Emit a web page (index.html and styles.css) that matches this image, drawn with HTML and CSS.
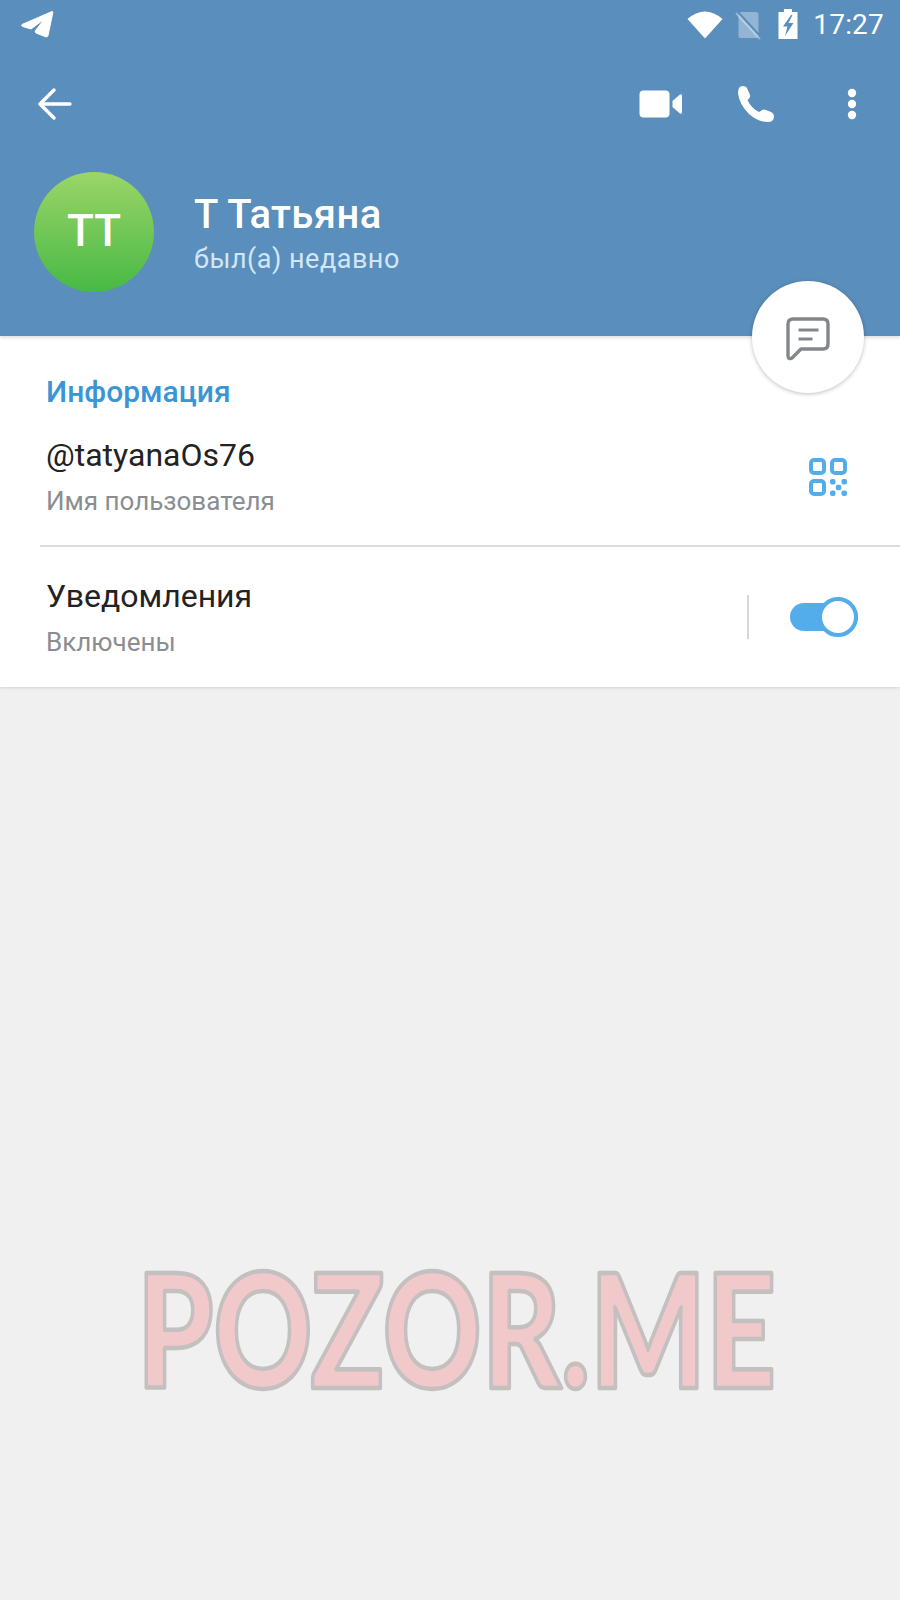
FILE: index.html
```html
<!DOCTYPE html>
<html lang="ru">
<head>
<meta charset="UTF-8">
<meta name="viewport" content="width=device-width, initial-scale=1.0">
<title>Т Татьяна</title>
<link rel="stylesheet" href="styles.css">
</head>
<body>
<div class="screen">
    <header class="header">
        <div class="status-bar">
            <svg class="icon-plane" width="34" height="28" viewBox="0 0 34 28">
                <path d="M32 1.500 L2 14.500 Q0.500 15.500 2.500 16.500 L11 19 L24.500 9 L15.500 20.500 Q14.500 21.500 16 23 L25.500 26.800 Q27.500 27.500 28 25.500 L32.800 3 Q33 1.200 32 1.500 Z" fill="#fff" stroke="#fff" stroke-linejoin="round"/>
            </svg>
            <div class="status-right">
                <svg width="36" height="29" viewBox="0 0 36 29">
                    <path d="M0.500 9 Q18 -6 35.500 9 L18 28.500 Z" fill="#fff"/>
                </svg>
                <svg class="icon-sim" width="27" height="29" viewBox="0 0 27 29">
                    <path d="M3.500 3 Q3.500 1 5.500 1 L20 1 Q23.500 1 23.500 3 L23.500 25 Q23.500 27 21.500 27 L5.500 27 Q3.500 27 3.500 25 Z" fill="#fff" opacity="0.35"/>
                    <path d="M1 2 L25 28" stroke="#fff" stroke-width="2" opacity="0.35"/>
                    <path d="M3 1 L26 26" stroke="#5a8ebc" stroke-width="2"/>
                </svg>
                <svg class="icon-battery" width="20" height="30" viewBox="0 0 20 30">
                    <path d="M6 0 H14 V3 H19.500 V30 H0.500 V3 H6 Z" fill="#fff"/>
                    <path d="M13 6 L5 17.500 H9.500 L7 27 L15.500 14 H10.500 L14.500 6 Z" fill="#5a8ebc"/>
                </svg>
                <span class="time">17:27</span>
            </div>
        </div>
        <div class="toolbar">
            <svg class="icon-back" width="34" height="32" viewBox="0 0 34 32">
                <path d="M2 16 H32 M16 2 L2 16 L16 30" fill="none" stroke="#fff" stroke-width="3.400" stroke-linecap="round" stroke-linejoin="round"/>
            </svg>
            <div class="toolbar-actions">
                <svg class="icon-video" width="44" height="28" viewBox="0 0 44 28">
                    <rect x="0.500" y="0.500" width="30" height="27" rx="4" fill="#fff"/>
                    <path d="M33.500 11 L41 4.500 Q43 3.500 43 6 L43 22 Q43 24.500 41 23.500 L33.500 17 Z" fill="#fff"/>
                </svg>
                <svg class="icon-phone" width="38" height="38" viewBox="0 0 38 38">
                    <path d="M2 3 Q3 1 6 1 Q9 1 10 3 L13 10 Q13.500 12 12 13.500 L10.500 15 Q14 23 22 27 L24.500 25.500 Q26.500 24 29 25 L34 27 Q37 28.500 37 31 Q37 37 31 37 Q21 37 12 29 Q2 19 1 8 Q1 5 2 3 Z" fill="#fff"/>
                </svg>
                <svg class="icon-more" width="10" height="32" viewBox="0 0 10 32">
                    <circle cx="5" cy="5" r="4.200" fill="#fff"/>
                    <circle cx="5" cy="16" r="4.200" fill="#fff"/>
                    <circle cx="5" cy="27" r="4.200" fill="#fff"/>
                </svg>
            </div>
        </div>
        <div class="profile">
            <div class="avatar">ТТ</div>
            <div class="profile-text">
                <div class="profile-name">Т Татьяна</div>
                <div class="profile-status">был(а) недавно</div>
            </div>
        </div>
        <div class="fab">
            <svg class="icon-chat" width="44" height="44" viewBox="0 0 44 44">
                <path d="M7 2 H37 Q42 2 42 7 V27 Q42 32 37 32 H15 L6 41 Q2.500 43 2 39 V7 Q2 2 7 2 Z" fill="none" stroke="#83878b" stroke-width="3.400" stroke-linejoin="round"/>
                <path d="M12.500 13 H32.500 M12.500 22 H26.500" stroke="#83878b" stroke-width="3.200"/>
            </svg>
        </div>
    </header>

    <section class="info">
        <h2 class="info-title">Информация</h2>
        <div class="row row-user">
            <div>
                <div class="row-value">@tatyanaOs76</div>
                <div class="row-label">Имя пользователя</div>
            </div>
            <svg class="icon-qr" width="38" height="38" viewBox="0 0 38 38">
                <g fill="none" stroke="#54adeb" stroke-width="4">
                    <rect x="2" y="2" width="13" height="13" rx="3"/>
                    <rect x="23" y="2" width="13" height="13" rx="3"/>
                    <rect x="2" y="23" width="13" height="13" rx="3"/>
                </g>
                <g fill="#54adeb">
                    <rect x="21" y="21" width="5.500" height="5.500" rx="2"/>
                    <rect x="32.500" y="21" width="5.500" height="5.500" rx="2"/>
                    <rect x="26.800" y="26.800" width="5.500" height="5.500" rx="2"/>
                    <rect x="21" y="32.500" width="5.500" height="5.500" rx="2"/>
                    <rect x="32.500" y="32.500" width="5.500" height="5.500" rx="2"/>
                </g>
            </svg>
        </div>
        <div class="row row-notify">
            <div class="row-text">
                <div class="row-value">Уведомления</div>
                <div class="row-label">Включены</div>
            </div>
            <div class="row-side">
                <div class="vline"></div>
                <div class="switch"><div class="knob"></div></div>
            </div>
        </div>
    </section>

    <div class="empty">
        <svg class="watermark" width="680" height="220" viewBox="0 0 680 220">
            <text transform="translate(8 186) scale(1 1.29)">POZOR.ME</text>
        </svg>
    </div>
</div>
</body>
</html>
```

FILE: styles.css
```css
* {
    box-sizing: border-box;
}

body {
    margin: 0;
    font-family: Roboto, "Liberation Sans", sans-serif;
    background-color: #f0f0f0;
}

.screen {
    width: 900px;
    height: 1600px;
    display: flex;
    flex-direction: column;
    overflow: hidden;
}

.header {
    position: relative;
    height: 336px;
    flex-shrink: 0;
    background-color: #5a8ebc;
    color: white;
    box-shadow: 0 2px 3px rgba(0, 0, 0, 0.12);
    z-index: 1;
}

.status-bar {
    height: 50px;
    padding: 10px 16px 0 20px;
    display: flex;
    justify-content: space-between;
    align-items: flex-start;
}

.status-right {
    display: flex;
    align-items: flex-start;
}

.icon-sim {
    margin-left: 12px;
    margin-top: 1px;
}

.icon-battery {
    margin-left: 16px;
    margin-top: -1px;
}

.time {
    margin-left: 15px;
    font-size: 28px;
    line-height: 30px;
    letter-spacing: 0.2px;
}

.toolbar {
    height: 104px;
    padding: 4px 43px 0 38px;
    display: flex;
    justify-content: space-between;
    align-items: center;
}

.toolbar-actions {
    display: flex;
    align-items: center;
}

.icon-phone {
    margin-left: 54px;
}

.icon-more {
    margin-left: 72px;
}

.profile {
    display: flex;
    align-items: center;
    padding: 18px 0 0 34px;
}

.avatar {
    width: 120px;
    height: 120px;
    padding-bottom: 3px;
    border-radius: 50%;
    background: linear-gradient(#9cd568, #47b945);
    display: flex;
    align-items: center;
    justify-content: center;
    font-size: 44px;
    font-weight: 500;
}

.profile-text {
    margin-left: 40px;
    padding-top: 8px;
}

.profile-name {
    font-size: 40px;
    font-weight: 500;
    line-height: 46px;
    letter-spacing: 0.4px;
}

.profile-status {
    margin-top: 1px;
    font-size: 27px;
    line-height: 41px;
    color: #d3e6f6;
    letter-spacing: 0.5px;
}

.fab {
    position: absolute;
    right: 36px;
    top: 281px;
    width: 112px;
    height: 112px;
    padding-top: 3px;
    border-radius: 50%;
    background-color: white;
    box-shadow: 0 1px 4px rgba(0, 0, 0, 0.25);
    display: flex;
    align-items: center;
    justify-content: center;
}

.info {
    height: 351px;
    flex-shrink: 0;
    background-color: white;
    box-shadow: 0 1px 3px rgba(0, 0, 0, 0.12);
}

.info-title {
    margin: 0;
    padding: 37px 0 0 46px;
    font-size: 30px;
    font-weight: 500;
    line-height: 38px;
    color: #3a95d5;
}

.row {
    display: flex;
    justify-content: space-between;
    align-items: center;
    padding-left: 46px;
}

.row-user {
    height: 136px;
    margin-left: 40px;
    padding-left: 6px;
    padding-right: 53px;
    padding-bottom: 2px;
    border-bottom: 2px solid #dcdcdc;
}

.row-notify {
    height: 140px;
    padding-right: 42px;
}

.row-text {
    padding-top: 2px;
}

.row-value {
    font-size: 32px;
    line-height: 40px;
    color: #222;
}

.row-label {
    margin-top: 8px;
    font-size: 26px;
    line-height: 36px;
    color: #8a8d91;
}

.row-side {
    display: flex;
    align-items: center;
}

.vline {
    width: 2px;
    height: 44px;
    background-color: #d8d8d8;
    margin-right: 41px;
}

.switch {
    position: relative;
    width: 68px;
    height: 28px;
    border-radius: 14px;
    background-color: #54adeb;
}

.knob {
    position: absolute;
    right: 0;
    top: -6px;
    width: 40px;
    height: 40px;
    border-radius: 50%;
    background-color: white;
    border: 4px solid #54adeb;
}

.empty {
    flex-grow: 1;
    padding: 515px 0 0 129px;
}

.watermark {
    display: block;
}

.watermark text {
    font-family: Lato, "Liberation Sans", sans-serif;
    font-size: 122px;
    font-weight: 900;
    fill: #f1c9ca;
    stroke: #c4c0c0;
    stroke-width: 3.500px;
    stroke-linejoin: round;
}
```
